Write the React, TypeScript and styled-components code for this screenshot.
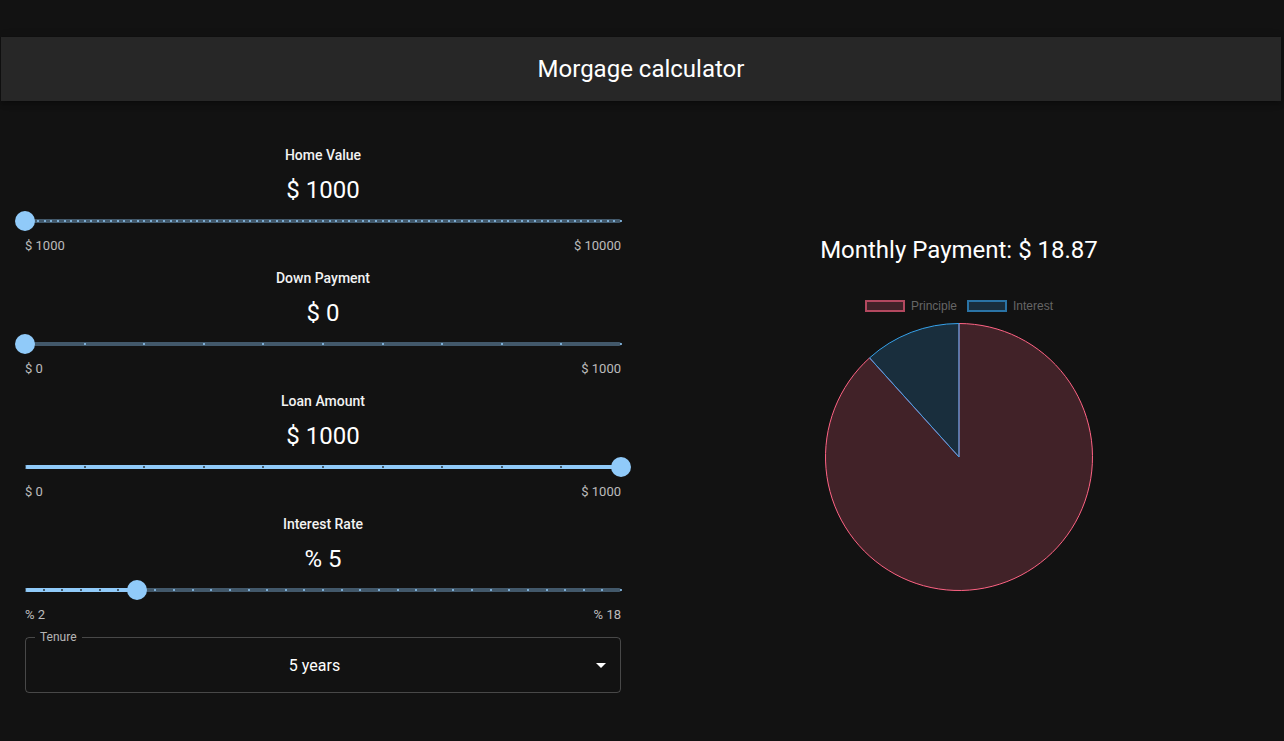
import React from 'react';
import styled, { createGlobalStyle } from 'styled-components';

const GlobalStyle = createGlobalStyle`
  html, body { margin: 0; padding: 0; background: #121212; }
  body { font-family: Roboto, "Liberation Sans", Arial, sans-serif; color: #fff; }
  * { box-sizing: border-box; }
`;

const Page = styled.div`
  width: 1284px;
  min-height: 741px;
  background: #121212;
`;

const Header = styled.header`
  margin: 37px 3px 0 1px;
  height: 64px;
  background: #272727;
  display: flex;
  align-items: center;
  justify-content: center;
  box-shadow: 0 2px 4px -1px rgba(0,0,0,0.2), 0 4px 5px 0 rgba(0,0,0,0.14), 0 1px 10px 0 rgba(0,0,0,0.12);
`;

const Title = styled.h1`
  margin: 0;
  font-size: 24px;
  font-weight: 400;
  line-height: 32px;
  color: #fff;
`;

const Main = styled.main`
  display: grid;
  grid-template-columns: 642px 634px;
`;

const LeftCol = styled.section`
  padding: 43px 21px 0 25px;
  display: flex;
  flex-direction: column;
`;

const Field = styled.div`
  display: flex;
  flex-direction: column;
  align-items: center;
  margin-bottom: 14px;
`;

const FieldLabel = styled.div`
  font-size: 14px;
  font-weight: 500;
  line-height: 22px;
  margin-bottom: 8px;
  color: #f2f2f2;
`;

const FieldValue = styled.div`
  font-size: 24px;
  line-height: 32px;
  color: #fff;
`;

const SliderRoot = styled.div`
  position: relative;
  width: 100%;
  padding: 13px 0;
`;

const Rail = styled.div`
  height: 4px;
  border-radius: 2px;
  background: #90caf9;
  opacity: 0.38;
`;

const Track = styled.div`
  position: absolute;
  left: 0;
  top: 13px;
  height: 4px;
  border-radius: 2px;
  background: #90caf9;
`;

const Mark = styled.span<{ $active: boolean }>`
  position: absolute;
  top: 14px;
  width: 2px;
  height: 2px;
  border-radius: 1px;
  background: ${(p) => (p.$active ? '#121212' : '#90caf9')};
  opacity: ${(p) => (p.$active ? 0.8 : 1)};
`;

const Thumb = styled.span`
  position: absolute;
  top: 5px;
  width: 20px;
  height: 20px;
  border-radius: 50%;
  background: #90caf9;
`;

const MarkLabels = styled.div`
  width: 100%;
  display: flex;
  justify-content: space-between;
  font-size: 13px;
  line-height: 17px;
  padding-top: 1px;
  height: 17px;
  color: rgba(255,255,255,0.72);
`;

const SelectBox = styled.div`
  position: relative;
  margin-top: 1px;
  height: 56px;
  border: 1px solid rgba(255,255,255,0.23);
  border-radius: 4px;
  display: flex;
  align-items: center;
  padding: 0 7px 0 14px;
`;

const SelectLabel = styled.span`
  position: absolute;
  top: -9px;
  left: 9px;
  padding: 0 5px;
  background: #121212;
  font-size: 12px;
  line-height: 16px;
  color: rgba(255,255,255,0.7);
`;

const SelectValue = styled.div`
  flex: 1;
  text-align: center;
  font-size: 16px;
  line-height: 23px;
  color: #fff;
`;

const ArrowIcon = styled.svg`
  width: 24px;
  height: 24px;
  fill: #fff;
  flex: none;
`;

const RightCol = styled.section`
  padding-top: 133px;
  display: flex;
  flex-direction: column;
  align-items: center;
`;

const Payment = styled.h2`
  margin: 0;
  font-size: 24px;
  font-weight: 400;
  line-height: 32px;
  color: #fff;
`;

const Legend = styled.div`
  margin-top: 34px;
  height: 12px;
  display: flex;
  align-items: center;
  gap: 10px;
  font-family: "Liberation Sans", Arial, sans-serif;
  font-size: 12px;
  color: #666;
`;

const LegendItem = styled.div`
  display: flex;
  align-items: center;
  gap: 6px;
`;

const Swatch = styled.span<{ $fill: string; $stroke: string }>`
  width: 40px;
  height: 12px;
  background: ${(p) => p.$fill};
  border: 2px solid ${(p) => p.$stroke};
`;

const PieSvg = styled.svg`
  margin-top: 10px;
  display: block;
`;

type SliderProps = { min: number; max: number; step: number; value: number };

function Slider({ min, max, step, value }: SliderProps) {
  const pct = ((value - min) / (max - min)) * 100;
  const count = Math.round((max - min) / step);
  const marks = Array.from({ length: count + 1 }, (_, i) => (i / count) * 100);
  return (
    <SliderRoot>
      <Rail />
      <Track style={{ width: `${pct}%` }} />
      {marks.map((m, i) => (
        <Mark key={i} $active={m <= pct} style={{ left: `calc(${m}% - 1px)` }} />
      ))}
      <Thumb style={{ left: `calc(${pct}% - 10px)` }} />
    </SliderRoot>
  );
}

type FieldDef = { label: string; prefix: string; min: number; max: number; step: number; value: number };

const fields: FieldDef[] = [
  { label: 'Home Value', prefix: '$', min: 1000, max: 10000, step: 100, value: 1000 },
  { label: 'Down Payment', prefix: '$', min: 0, max: 1000, step: 100, value: 0 },
  { label: 'Loan Amount', prefix: '$', min: 0, max: 1000, step: 100, value: 1000 },
  { label: 'Interest Rate', prefix: '%', min: 2, max: 18, step: 0.5, value: 5 },
];

function Pie() {
  const principal = 1000;
  const r = 0.05 / 12;
  const n = 60;
  const payment = (principal * r) / (1 - Math.pow(1 + r, -n));
  const interest = payment * n - principal;
  const total = principal + interest;
  const cx = 135;
  const cy = 135;
  const R = 133.5;
  const theta = (principal / total) * 2 * Math.PI;
  const ex = cx + R * Math.sin(theta);
  const ey = cy - R * Math.cos(theta);
  const p1 = `M${cx},${cy} L${cx},${cy - R} A${R},${R} 0 1 1 ${ex},${ey} Z`;
  const p2 = `M${cx},${cy} L${ex},${ey} A${R},${R} 0 0 1 ${cx},${cy - R} Z`;
  return (
    <PieSvg width={270} height={270} viewBox="0 0 270 270">
      <path d={p1} fill="rgba(255,99,132,0.2)" stroke="rgb(255,99,132)" strokeWidth={1} />
      <path d={p2} fill="rgba(54,162,235,0.2)" stroke="rgb(54,162,235)" strokeWidth={1} />
    </PieSvg>
  );
}

export default function App() {
  return (
    <Page>
      <GlobalStyle />
      <Header>
        <Title>Morgage calculator</Title>
      </Header>
      <Main>
        <LeftCol>
          {fields.map((f) => (
            <Field key={f.label}>
              <FieldLabel>{f.label}</FieldLabel>
              <FieldValue>
                {f.prefix} {f.value}
              </FieldValue>
              <Slider min={f.min} max={f.max} step={f.step} value={f.value} />
              <MarkLabels>
                <span>
                  {f.prefix} {f.min}
                </span>
                <span>
                  {f.prefix} {f.max}
                </span>
              </MarkLabels>
            </Field>
          ))}
          <SelectBox>
            <SelectLabel>Tenure</SelectLabel>
            <SelectValue>5 years</SelectValue>
            <ArrowIcon viewBox="0 0 24 24">
              <path d="M7 10l5 5 5-5z" />
            </ArrowIcon>
          </SelectBox>
        </LeftCol>
        <RightCol>
          <Payment>Monthly Payment: $ 18.87</Payment>
          <Legend>
            <LegendItem>
              <Swatch $fill="rgba(255,99,132,0.2)" $stroke="rgba(255,99,132,0.6)" />
              <span>Principle</span>
            </LegendItem>
            <LegendItem>
              <Swatch $fill="rgba(54,162,235,0.2)" $stroke="rgba(54,162,235,0.6)" />
              <span>Interest</span>
            </LegendItem>
          </Legend>
          <Pie />
        </RightCol>
      </Main>
    </Page>
  );
}
